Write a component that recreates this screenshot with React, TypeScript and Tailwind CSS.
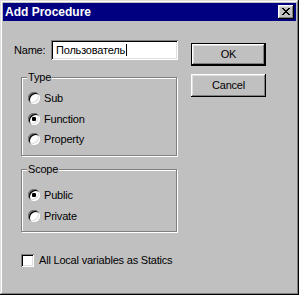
import React from "react";

const raised =
  "shadow-[inset_-1px_-1px_0_0_#000,inset_1px_1px_0_0_#fff,inset_-2px_-2px_0_0_#808080,inset_2px_2px_0_0_#dfdfdf]";
const sunken =
  "shadow-[inset_1px_1px_0_0_#808080,inset_-1px_-1px_0_0_#fff,inset_2px_2px_0_0_#000,inset_-2px_-2px_0_0_#dfdfdf]";

function Radio({ checked, label, className = "" }: { checked?: boolean; label: string; className?: string }) {
  return (
    <div className={"flex items-center h-[12px] " + className}>
      <div
        className={
          "w-[12px] h-[12px] rounded-full bg-white flex items-center justify-center shrink-0 " + sunken
        }
      >
        {checked && <div className="w-[4px] h-[4px] rounded-[1px] bg-black" />}
      </div>
      <span className="ml-[4px] leading-[13px]">{label}</span>
    </div>
  );
}

function Group({ title, className, children }: { title: string; className: string; children: React.ReactNode }) {
  return (
    <div
      className={
        "relative ml-[7px] w-[156px] border border-[#808080] shadow-[1px_1px_0_0_#fff,inset_1px_1px_0_0_#fff] " +
        className
      }
    >
      <span className="absolute left-[5px] -top-[7px] px-[1px] bg-[#c0c0c0] leading-[13px]">{title}</span>
      {children}
    </div>
  );
}

export default function App() {
  return (
    <div
      className={
        "w-[299px] h-[295px] bg-[#c0c0c0] p-[3px] flex flex-col text-black text-[11px] tracking-[-0.2px] " +
        "font-['Liberation_Sans',Arial,sans-serif] " +
        "shadow-[inset_-1px_-1px_0_0_#000,inset_1px_1px_0_0_#dfdfdf,inset_-2px_-2px_0_0_#808080,inset_2px_2px_0_0_#fff]"
      }
    >
      <div className="h-[18px] bg-[#000080] flex items-center justify-between pl-[2px] pr-[2px]">
        <span className="text-white font-bold text-[12px] tracking-normal leading-[18px]">Add Procedure</span>
        <div className={"w-[16px] h-[14px] bg-[#c0c0c0] flex items-start justify-start " + raised}>
          <svg width="8" height="7" viewBox="0 0 8 7" className="ml-[4px] mt-[3px]" shapeRendering="crispEdges">
            <path
              d="M0 0h2v1H0zM6 0h2v1H6zM1 1h2v1H1zM5 1h2v1H5zM2 2h4v1H2zM3 3h2v1H3zM2 4h4v1H2zM1 5h2v1H1zM5 5h2v1H5zM0 6h2v1H0zM6 6h2v1H6z"
              fill="#000"
            />
          </svg>
        </div>
      </div>

      <div className="flex">
        <div className="w-[175px] ml-[11px] mt-[19px] flex flex-col">
          <div className="flex items-center h-[20px]">
            <span className="w-[37px]">Name:</span>
            <div className={"w-[127px] h-[20px] bg-white flex items-center pl-[5px] " + sunken}>
              <span className="leading-[13px]">Пользователь</span>
              <div className="w-[1px] h-[12px] bg-black ml-[1px]" />
            </div>
          </div>

          <Group title="Type" className="mt-[17px] h-[79px] pt-[14px] pl-[6px]">
            <Radio label="Sub" />
            <Radio label="Function" checked className="mt-[9px]" />
            <Radio label="Property" className="mt-[8px]" />
          </Group>

          <Group title="Scope" className="mt-[13px] h-[63px] pt-[19px] pl-[6px]">
            <Radio label="Public" checked />
            <Radio label="Private" className="mt-[9px]" />
          </Group>

          <div className="flex items-center mt-[22px] ml-[7px]">
            <div className={"w-[13px] h-[13px] bg-white shrink-0 " + sunken} />
            <span className="ml-[5px] leading-[13px]">All Local variables as Statics</span>
          </div>
        </div>

        <div className="ml-[2px] mt-[22px] flex flex-col">
          <div className="w-[75px] h-[23px] border border-black">
            <div className={"w-full h-full flex items-center justify-center " + raised}>OK</div>
          </div>
          <div className={"mt-[8px] w-[75px] h-[23px] flex items-center justify-center " + raised}>Cancel</div>
        </div>
      </div>
    </div>
  );
}
